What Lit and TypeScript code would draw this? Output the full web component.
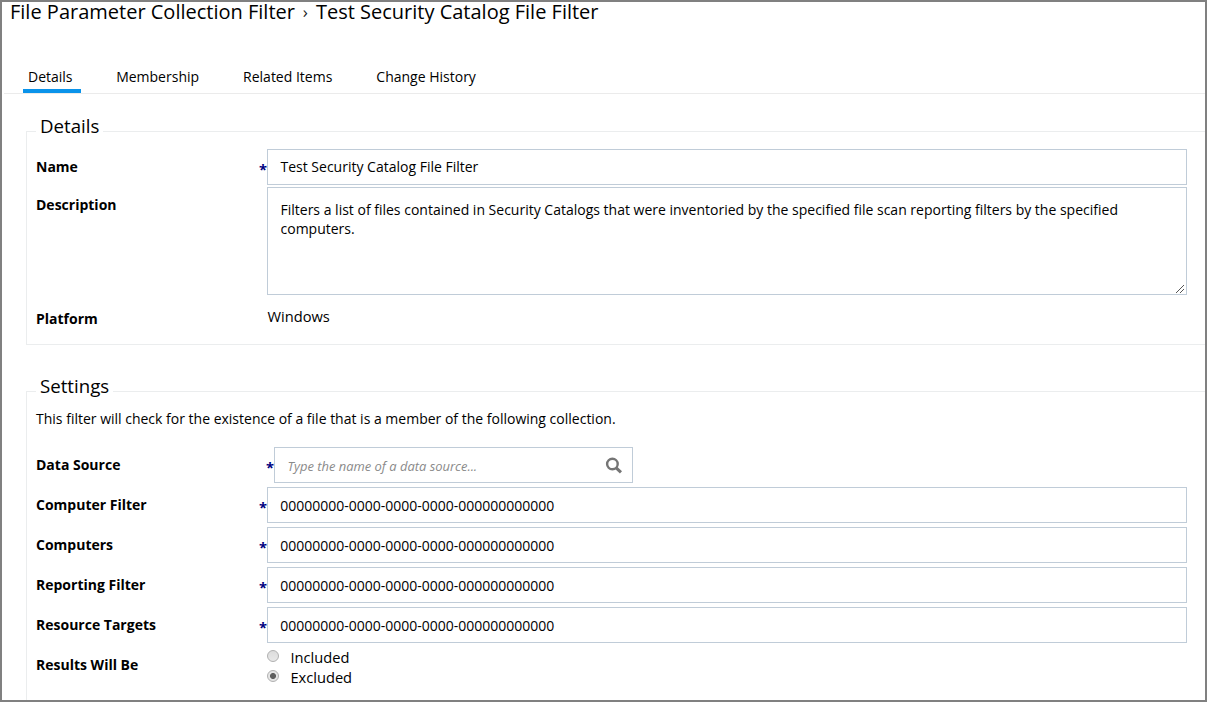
import { LitElement, html, css, nothing } from "lit";
import { customElement, property, state } from "lit/decorators.js";

const EMPTY_ID = "00000000-0000-0000-0000-000000000000";

@customElement("form-row")
class FormRow extends LitElement {
  @property() label = "";
  @property({ type: Boolean }) required = false;

  static styles = css`
    :host {
      display: flex;
      align-items: flex-start;
    }
    .label {
      flex: none;
      width: 220px;
      padding-top: var(--label-top, 8px);
      font-weight: 700;
      line-height: 20px;
      font-size: 14px;
    }
    .star {
      flex: none;
      box-sizing: border-box;
      width: var(--star-width, 11px);
      padding-top: 10px;
      text-align: right;
      color: #000080;
      font-weight: 700;
      font-size: 14.67px;
      line-height: 20px;
    }
    .content {
      flex: 1;
      min-width: 0;
    }
  `;

  render() {
    return html`
      <div class="label">${this.label}</div>
      <div class="star">${this.required ? "*" : nothing}</div>
      <div class="content"><slot></slot></div>
    `;
  }
}

@customElement("app-root")
class AppRoot extends LitElement {
  @state() tab = "Details";
  @state() result = "Excluded";

  static styles = css`
    :host {
      display: block;
      box-sizing: border-box;
      width: 1207px;
      height: 702px;
      border: 2px solid #808080;
      overflow: hidden;
      background: #fff;
      color: #000;
      font: 14px/20px "Open Sans", sans-serif;
    }
    .title {
      display: flex;
      height: 62px;
      padding-left: 8px;
      font-size: 20px;
      line-height: 20px;
      white-space: pre;
    }
    .sep {
      width: 21px;
      text-align: center;
      font-size: 17px;
      line-height: 20px;
      color: #222;
    }
    .tabs {
      display: flex;
      gap: 34px;
      height: 29px;
      margin-left: 2px;
      padding-left: 19px;
      border-bottom: 1px solid #ebebeb;
      font-size: 14px;
    }
    .tab {
      height: 25px;
      padding: 0 5px;
      line-height: 26px;
      border-bottom: 4px solid transparent;
      white-space: nowrap;
      cursor: pointer;
    }
    .tab.active {
      padding-right: 8px;
      border-color: #0a93ea;
      margin-right: -3.4px;
    }
    .group {
      margin: 0 -2px 0 24px;
      padding: 3px 0 0 9px;
      border: 1px solid #ebedee;
      min-width: 0;
      box-sizing: border-box;
    }
    .details {
      margin-top: 22px;
      height: 229px;
    }
    .settings {
      margin-top: 31px;
      height: 340px;
    }
    .legend {
      padding: 0 4px;
      height: 30px;
      line-height: 20px;
      font-size: 18.67px;
      box-sizing: border-box;
    }
    .field {
      box-sizing: border-box;
      width: 920px;
      height: 36px;
      padding: 0 13px 0 12.5px;
      border: 1px solid #c0ccd8;
      line-height: 34px;
      font-size: 14px;
      white-space: nowrap;
    }
    .area {
      position: relative;
      height: 108px;
      padding-top: 12px;
      line-height: 19px;
      white-space: normal;
    }
    .grip {
      position: absolute;
      right: 1px;
      bottom: 1px;
      display: block;
    }
    .name-row { height: 38px; }
    .area-row { height: 108px; }
    .plain { padding: 11px 0 0 0.5px; font-size: 14.67px; }
    .platform { --label-top: 14px; }
    .note { height: 38px; line-height: 20px; white-space: nowrap; }
    .source { height: 40px; --star-width: 18px; }
    .id-row { height: 40px; }
    .id-row .field { line-height: 36px; padding-left: 12.2px; }
    .search {
      display: flex;
      justify-content: space-between;
      align-items: center;
      width: 359px;
      padding-right: 10px;
      font-size: 12.95px;
      font-style: italic;
      color: #8a8a8a;
    }
    .hint { padding-top: 1px; }
    .options { padding-top: 0; font-size: 14.67px; }
    .option {
      display: flex;
      height: 20px;
      line-height: 21px;
      gap: 11.4px;
      cursor: pointer;
    }
    .radio {
      box-sizing: border-box;
      width: 12px;
      height: 12px;
      margin-top: 3px;
      border: 1px solid #b0b0b0;
      border-radius: 50%;
      background: linear-gradient(#dcdcdc, #e8e8e8);
    }
    .radio.on {
      background: radial-gradient(circle, #606060 0 2.6px, #e6e6e6 3.4px);
    }
  `;

  idRow(label: string) {
    return html`<form-row class="id-row" label=${label} required>
      <div class="field">${EMPTY_ID}</div>
    </form-row>`;
  }

  render() {
    return html`
      <div class="title"><span>File Parameter Collection Filter</span><span class="sep">›</span><span>Test Security Catalog File Filter</span></div>
      <div class="tabs">
        ${["Details", "Membership", "Related Items", "Change History"].map(
          (t) => html`<div class="tab ${t === this.tab ? "active" : ""}" @click=${() => (this.tab = t)}>${t}</div>`
        )}
      </div>
      <fieldset class="group details">
        <legend class="legend">Details</legend>
        <form-row class="name-row" label="Name" required>
          <div class="field">Test Security Catalog File Filter</div>
        </form-row>
        <form-row class="area-row" label="Description">
          <div class="field area">Filters a list of files contained in Security Catalogs that were inventoried by the specified file scan reporting filters by the specified computers.
            <svg class="grip" width="9" height="9" viewBox="0 0 9 9" shape-rendering="crispEdges">
              <path d="M0 8h1v1h-1zM1 7h1v1h-1zM2 6h1v1h-1zM3 5h1v1h-1zM4 4h1v1h-1zM5 3h1v1h-1zM6 2h1v1h-1zM7 1h1v1h-1zM4 8h1v1h-1zM5 7h1v1h-1zM6 6h1v1h-1zM7 5h1v1h-1z" fill="#555" />
            </svg>
          </div>
        </form-row>
        <form-row class="platform" label="Platform">
          <div class="plain">Windows</div>
        </form-row>
      </fieldset>
      <fieldset class="group settings">
        <legend class="legend">Settings</legend>
        <div class="note">This filter will check for the existence of a file that is a member of the following collection.</div>
        <form-row class="source" label="Data Source" required>
          <div class="field search">
            <span class="hint">Type the name of a data source...</span>
            <svg width="17" height="17" viewBox="0 0 17 17" fill="none" stroke="#757575">
              <circle cx="7.4" cy="7" r="5.3" stroke-width="2.4" />
              <path d="M11.2 10.8L16 15.4" stroke-width="3.1" />
            </svg>
          </div>
        </form-row>
        ${["Computer Filter", "Computers", "Reporting Filter", "Resource Targets"].map((l) => this.idRow(l))}
        <form-row label="Results Will Be">
          <div class="options">
            ${["Included", "Excluded"].map(
              (o) => html`<div class="option" @click=${() => (this.result = o)}>
                <span class="radio ${o === this.result ? "on" : ""}"></span><span>${o}</span>
              </div>`
            )}
          </div>
        </form-row>
      </fieldset>
    `;
  }
}
